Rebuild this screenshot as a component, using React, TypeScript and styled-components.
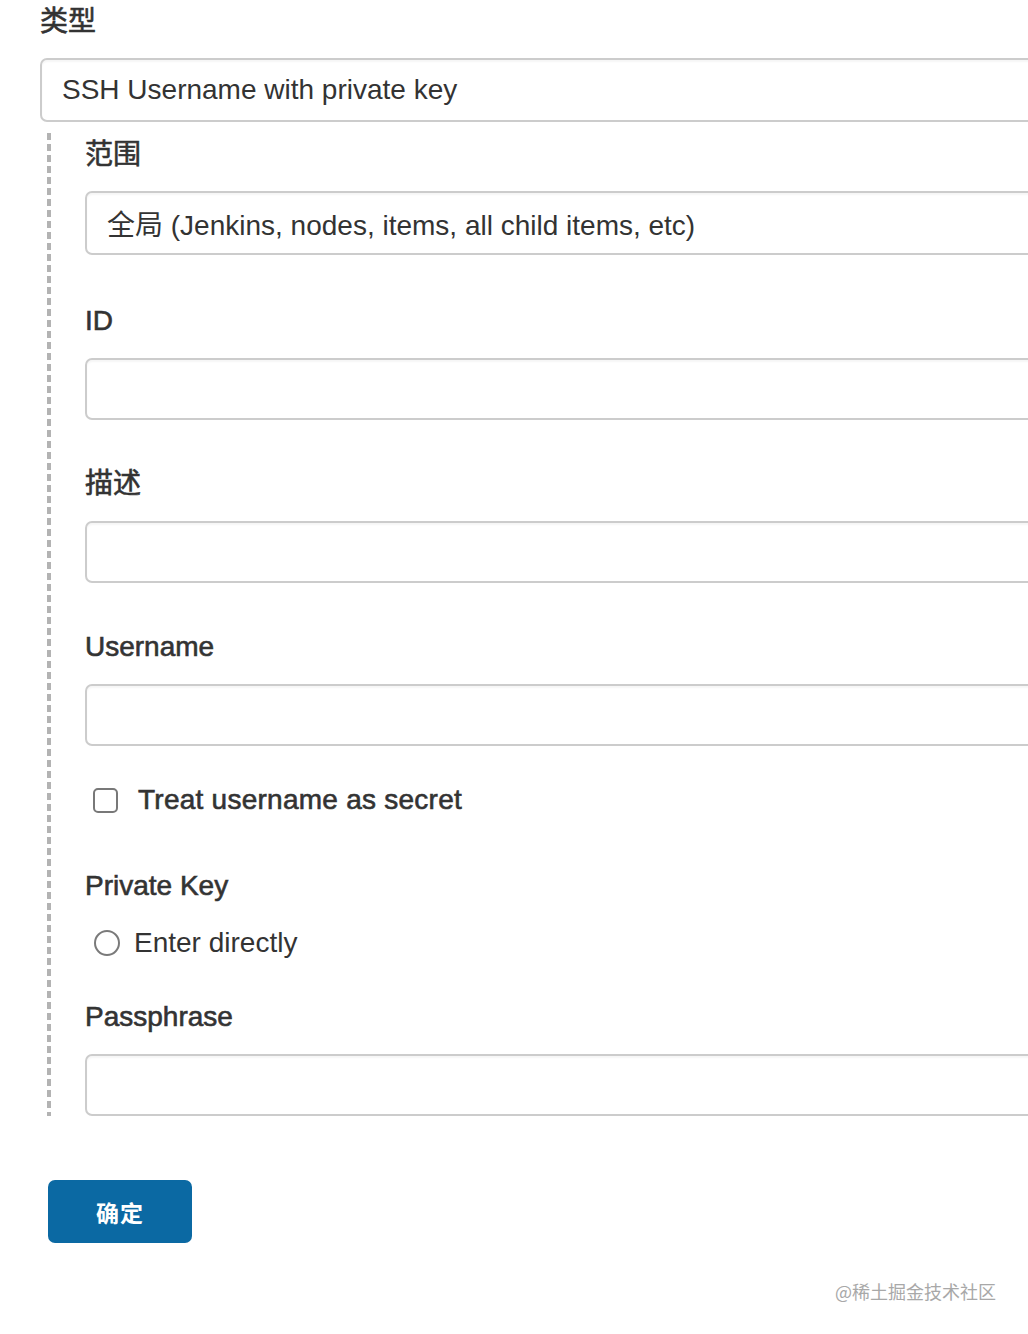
import React from "react";
import styled, { createGlobalStyle } from "styled-components";

const GlobalStyle = createGlobalStyle`
  html, body {
    margin: 0;
    padding: 0;
    background: #ffffff;
    overflow: hidden;
  }
  body {
    font-family: "Liberation Sans", Arial, "Noto Sans CJK SC", sans-serif;
    color: #333333;
  }
`;

const Page = styled.div`
  width: 1028px;
  min-height: 1334px;
  padding-left: 40px;
  box-sizing: border-box;
  display: flex;
  flex-direction: column;
`;

/* Field captions use a medium weight: regular face thickened by a thin stroke */
const Label = styled.div<{ $top?: number }>`
  margin-top: ${(p) => p.$top ?? 0}px;
  height: 36px;
  line-height: 36px;
  font-size: 28px;
  font-weight: 400;
  -webkit-text-stroke: 0.6px #333333;
  color: #333333;
  white-space: nowrap;
`;

const TitleLabel = styled(Label)`
  margin-top: 2px;
  height: 40px;
  line-height: 40px;
`;

const Control = styled.div<{ $tall?: boolean; $top?: number }>`
  margin-top: ${(p) => p.$top ?? 19}px;
  width: calc(100% + 40px);
  height: ${(p) => (p.$tall ? 64 : 62)}px;
  box-sizing: border-box;
  border: 2px solid #cccccc;
  border-radius: 7px;
  background: #ffffff;
  box-shadow: inset 0 2px 2px rgba(0, 0, 0, 0.04);
  display: flex;
  align-items: center;
  padding-left: 20px;
  font-size: 28px;
  color: #333333;
  white-space: nowrap;
  overflow: hidden;
`;

const Nested = styled.div`
  margin-top: 11px;
  margin-left: 7px;
  padding-left: 38px;
  padding-top: 4px;
  display: flex;
  flex-direction: column;
  background-image: linear-gradient(
    to bottom,
    #b3b3b3 0,
    #b3b3b3 7px,
    transparent 7px,
    transparent 11px
  );
  background-size: 4px 11px;
  background-repeat: repeat-y;
  background-position: 0 0;
`;

const Field = styled.div<{ $top?: number }>`
  margin-top: ${(p) => p.$top ?? 0}px;
  display: flex;
  flex-direction: column;
`;

const OptionRow = styled.label<{ $top: number; $gap: number }>`
  margin-top: ${(p) => p.$top}px;
  height: 36px;
  display: flex;
  align-items: center;
  gap: ${(p) => p.$gap}px;
  padding-left: 8px;
  white-space: nowrap;
`;

const CheckBox = styled.span`
  width: 25px;
  height: 25px;
  box-sizing: border-box;
  border: 2px solid #787878;
  border-radius: 5px;
  background: #ffffff;
  flex: none;
`;

const Radio = styled.span`
  width: 26px;
  height: 26px;
  box-sizing: border-box;
  border: 2px solid #7a7a7a;
  border-radius: 50%;
  background: #ffffff;
  flex: none;
  margin-left: 1px;
`;

const OptionText = styled.span<{ $medium?: boolean }>`
  font-size: 28px;
  font-weight: 400;
  letter-spacing: ${(p) => (p.$medium ? "0.25px" : "0")};
  -webkit-text-stroke: ${(p) => (p.$medium ? "0.6px #333333" : "0")};
  color: #333333;
`;

const SubmitButton = styled.button`
  margin-top: 64px;
  margin-left: 8px;
  width: 144px;
  height: 63px;
  border: none;
  border-radius: 7px;
  background: #0b69a3;
  color: #ffffff;
  font-family: "Noto Sans CJK SC", sans-serif;
  font-size: 23px;
  font-weight: 700;
  letter-spacing: 1px;
  cursor: pointer;
  align-self: flex-start;
`;

const Footer = styled.div`
  margin-top: 36px;
  display: flex;
  justify-content: flex-end;
  padding-right: 32px;
`;

const Watermark = styled.span`
  font-family: "Noto Sans CJK SC", sans-serif;
  font-size: 18px;
  line-height: 24px;
  color: #a8a8a8;
`;

export default function App() {
  return (
    <>
      <GlobalStyle />
      <Page>
        <TitleLabel>类型</TitleLabel>
        <Control $tall $top={16}>SSH Username with private key</Control>
        <Nested>
          <Field>
            <Label>范围</Label>
            <Control $tall $top={18}>全局 (Jenkins, nodes, items, all child items, etc)</Control>
          </Field>
          <Field $top={48}>
            <Label>ID</Label>
            <Control />
          </Field>
          <Field $top={46}>
            <Label>描述</Label>
            <Control />
          </Field>
          <Field $top={46}>
            <Label>Username</Label>
            <Control />
          </Field>
          <OptionRow $top={36} $gap={20}>
            <CheckBox />
            <OptionText $medium>Treat username as secret</OptionText>
          </OptionRow>
          <Label $top={50}>Private Key</Label>
          <OptionRow $top={21} $gap={14}>
            <Radio />
            <OptionText>Enter directly</OptionText>
          </OptionRow>
          <Field $top={38}>
            <Label>Passphrase</Label>
            <Control />
          </Field>
        </Nested>
        <SubmitButton>确定</SubmitButton>
        <Footer>
          <Watermark>@稀土掘金技术社区</Watermark>
        </Footer>
      </Page>
    </>
  );
}
